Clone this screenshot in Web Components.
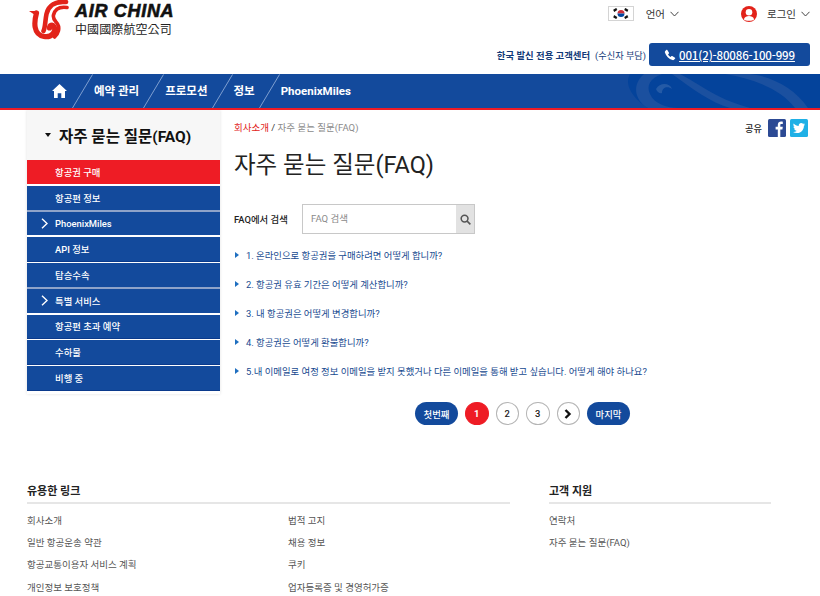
<!DOCTYPE html>
<html lang="ko">
<head>
<meta charset="utf-8">
<title>자주 묻는 질문(FAQ)</title>
<style>
  html, body { margin: 0; padding: 0; background: #fff; }
  body { height: 596px; overflow: hidden; font-family: Roboto, "Noto Sans CJK KR", sans-serif; color: #222; }
</style>
</head>
<body>
<air-header></air-header>
<air-nav></air-nav>
<air-page>
  <air-sidebar slot="side" heading="자주 묻는 질문(FAQ)">
    <side-item active>항공권 구매</side-item>
    <side-item>항공편 정보</side-item>
    <side-item expandable>PhoenixMiles</side-item>
    <side-item>API 정보</side-item>
    <side-item>탑승수속</side-item>
    <side-item expandable>특별 서비스</side-item>
    <side-item>항공편 초과 예약</side-item>
    <side-item>수하물</side-item>
    <side-item>비행 중</side-item>
  </air-sidebar>
  <air-faq>
    <faq-item>1. 온라인으로 항공권을 구매하려면 어떻게 합니까?</faq-item>
    <faq-item>2. 항공권 유효 기간은 어떻게 계산합니까?</faq-item>
    <faq-item>3. 내 항공권은 어떻게 변경합니까?</faq-item>
    <faq-item>4. 항공권은 어떻게 환불합니까?</faq-item>
    <faq-item>5.내 이메일로 여정 정보 이메일을 받지 못했거나 다른 이메일을 통해 받고 싶습니다. 어떻게 해야 하나요?</faq-item>
  </air-faq>
</air-page>
<air-footer></air-footer>

<script>
// Header: logo, language + login, call centre
const headerTemplate = document.createElement('template');
headerTemplate.innerHTML = `
<style>
  :host { display: flex; justify-content: space-between; height: 74px; padding: 0 10px 0 29px; box-sizing: border-box; }
  .logo { display: flex; gap: 6px; height: 40px; }
  .logo svg { width: 40px; height: 40px; flex: none; }
  .brand { padding-top: 2px; }
  .en { font: italic 700 18px/18px "Liberation Sans", sans-serif; color: #111; letter-spacing: .7px; -webkit-text-stroke: .6px #111; white-space: nowrap; }
  .zh { font: 400 12px/17px "Noto Sans CJK TC", sans-serif; color: #222; letter-spacing: .1px; white-space: nowrap; }
  .right { display: flex; flex-direction: column; align-items: flex-end; }
  .top { display: flex; align-items: center; height: 27px; font-size: 10.5px; color: #333; }
  .flag { width: 24px; height: 13px; border: 1px solid #d4d4d4; margin-right: 12px; display: block; }
  .chev { width: 9px; height: 6px; margin-left: 5px; }
  .lang { margin-right: 62px; display: flex; align-items: center; }
  .login { display: flex; align-items: center; }
  .user { width: 16px; height: 16px; margin-right: 10px; }
  .call { display: flex; align-items: center; margin-top: 16px; }
  .call-label { font-size: 9.4px; font-weight: 700; color: #123a78; white-space: nowrap; }
  .call-note { font-size: 9.2px; color: #123a78; margin: 0 3px 0 5px; white-space: nowrap; }
  .phone { display: flex; align-items: center; justify-content: center; gap: 3px; width: 161px; height: 23px; background: #134a9c; border-radius: 3px; color: #fff; font-family: "Noto Sans CJK KR", sans-serif; font-size: 11.5px; font-weight: 500; letter-spacing: -.15px; text-decoration: underline; }
  .phone svg { width: 12px; height: 12px; }
</style>
<div class="logo">
  <svg viewBox="29 0 40 40" fill="none" stroke="#e2231a" stroke-linecap="round">
    <path d="M29 11 L38 11 L35 15 Z" fill="#e2231a" stroke="none"/>
    <path d="M36.5 13 C34 22 33 34.5 44 36.5 C52 38 56.5 31 54 26.5 C52.5 24 49.5 25 49.5 28" stroke-width="5.2"/>
    <path d="M66 2 C56 1 48.5 5 46.5 14 C45 21 45.5 27 43.5 31" stroke-width="4.6"/>
    <path d="M67 7.5 C60 6.5 55 9 53.5 15 C52.5 19 55.5 21 57.5 24 C60 28 58.5 34 54.5 37" stroke-width="3.6"/>
  </svg>
  <div class="brand">
    <div class="en">AIR CHINA</div>
    <div class="zh">中國國際航空公司</div>
  </div>
</div>
<div class="right">
  <div class="top">
    <svg class="flag" viewBox="0 0 24 13">
      <rect width="24" height="13" fill="#fff"/>
      <path d="M8.5 6.5 a3.5 3.5 0 0 1 7 0 z" fill="#cd2e3a"/>
      <path d="M8.5 6.5 a3.5 3.5 0 0 0 7 0 z" fill="#0047a0"/>
      <g stroke="#111" stroke-width="1.3" stroke-linecap="square">
        <path d="M5 3 l2 -1.2 M5.5 4 l2 -1.2 M16.5 1.8 l2 1.2 M16 2.8 l2 1.2 M5 10 l2 1.2 M5.5 9 l2 1.2 M16.5 11.2 l2 -1.2 M16 10.2 l2 -1.2"/>
      </g>
    </svg>
    <span class="lang">언어
      <svg class="chev" viewBox="0 0 9 6" fill="none" stroke="#444"><path d="M.5 .8 L4.5 5 L8.5 .8"/></svg>
    </span>
    <svg class="user" viewBox="0 0 16 16">
      <circle cx="8" cy="8" r="8" fill="#e2231a"/>
      <circle cx="8" cy="6.2" r="3.3" fill="#fff"/>
      <path d="M2.8 13.5 C3.5 10.8 6 10 8 10 C10 10 12.5 10.8 13.2 13.5 C11.5 15.2 4.5 15.2 2.8 13.5 Z" fill="#fff"/>
    </svg>
    <span class="login">로그인
      <svg class="chev" viewBox="0 0 9 6" fill="none" stroke="#444"><path d="M.5 .8 L4.5 5 L8.5 .8"/></svg>
    </span>
  </div>
  <div class="call">
    <span class="call-label">한국 발신 전용 고객센터</span>
    <span class="call-note">(수신자 부담)</span>
    <span class="phone">
      <svg viewBox="0 0 24 24" fill="#fff"><path d="M6.6 2 L10 7.5 C10.3 8 10.2 8.6 9.8 9 L8 10.8 C9.2 13 11 14.8 13.2 16 L15 14.2 C15.4 13.8 16 13.7 16.5 14 L22 17.4 C22.6 17.8 22.7 18.5 22.3 19 L20 21.5 C19.2 22.3 18 22.6 17 22.2 C9.8 20 4 14.2 1.8 7 C1.4 6 1.7 4.8 2.5 4 L5 1.7 C5.5 1.3 6.2 1.4 6.6 2 Z"/></svg>
      001(2)-80086-100-999
    </span>
  </div>
</div>
`;

class AirHeader extends HTMLElement {
  constructor() {
    super();
    this.attachShadow({ mode: 'open' });
    this.shadowRoot.appendChild(headerTemplate.content.cloneNode(true));
  }
}
customElements.define('air-header', AirHeader);

// Main navigation bar
const navTemplate = document.createElement('template');
navTemplate.innerHTML = `
<style>
  :host { display: flex; align-items: center; position: relative; height: 36px; padding-left: 52px; box-sizing: border-box; background: #134a9c; border-bottom: 2px solid #ee1c25; overflow: hidden; }
  a { position: relative; color: #fff; font-size: 11.5px; font-weight: 700; white-space: nowrap; line-height: 34px; }
  .home { width: 15px; height: 14px; position: relative; display: block; }
  .sep { width: 21px; height: 34px; margin: 0 1px 0 4px; flex: none; position: relative; }
  .sep.first { margin-left: 5px; }
  .wave { position: absolute; right: 0; top: 0; width: 230px; height: 34px; }
</style>
<svg class="wave" viewBox="0 0 230 34" preserveAspectRatio="none">
  <rect width="230" height="34" fill="#04439b"/>
  <path d="M0 0 H40 C34 10 42 24 58 34 H0 Z" fill="#134a9c"/>
  <path d="M72 0 C60 4 56 12 60 20 C64 30 78 34 88 34 H58 C44 26 42 10 54 0 Z" fill="#1b509f"/>
  <path d="M66 15 C70 8 80 9 82 15 C78 12 72 13 72 19 C70 20 67 18 66 15 Z" fill="#245aa6"/>
  <path d="M90 0 C110 10 124 24 160 34 H140 C120 28 104 16 82 0 Z" fill="#1b509f"/>
  <path d="M135 0 C160 4 190 14 205 34 H218 C205 14 180 2 160 0 Z" fill="#1b509f"/>
</svg>
<svg class="home" viewBox="0 0 15 14" fill="#fff"><path d="M7.5 0 L15 7 H13 V14 H9.3 V9.3 H5.7 V14 H2 V7 H0 Z"/></svg>
<svg class="sep first" viewBox="0 0 21 34" fill="none" stroke="#7f9fd0"><path d="M.5 34 L20.5 .5"/></svg>
<a>예약 관리</a>
<svg class="sep" viewBox="0 0 21 34" fill="none" stroke="#7f9fd0"><path d="M.5 34 L20.5 .5"/></svg>
<a>프로모션</a>
<svg class="sep" viewBox="0 0 21 34" fill="none" stroke="#7f9fd0"><path d="M.5 34 L20.5 .5"/></svg>
<a>정보</a>
<svg class="sep" viewBox="0 0 21 34" fill="none" stroke="#7f9fd0"><path d="M.5 34 L20.5 .5"/></svg>
<a>PhoenixMiles</a>
`;

class AirNav extends HTMLElement {
  constructor() {
    super();
    this.attachShadow({ mode: 'open' });
    this.shadowRoot.appendChild(navTemplate.content.cloneNode(true));
  }
}
customElements.define('air-nav', AirNav);

// Two column page body
const pageTemplate = document.createElement('template');
pageTemplate.innerHTML = `
<style>
  :host { display: flex; padding-left: 27px; gap: 14px; height: 375px; box-sizing: border-box; }
</style>
<slot name="side"></slot>
<slot></slot>
`;

class AirPage extends HTMLElement {
  constructor() {
    super();
    this.attachShadow({ mode: 'open' });
    this.shadowRoot.appendChild(pageTemplate.content.cloneNode(true));
  }
}
customElements.define('air-page', AirPage);

// Sidebar menu
const sidebarTemplate = document.createElement('template');
sidebarTemplate.innerHTML = `
<style>
  :host { display: block; width: 193px; height: 284px; background: #fff; box-shadow: 0 0 3px rgba(0,0,0,.12); }
  h2 { display: flex; align-items: center; margin: 0; height: 50px; padding-left: 18px; gap: 8px; background: #f7f7f7; font-size: 15.5px; font-weight: 700; color: #111; white-space: nowrap; }
  i { width: 0; height: 0; border: 3px solid transparent; border-top: 4px solid #111; border-bottom: 0; }
  .list { display: flex; flex-direction: column; }
</style>
<h2><i></i><span class="label"></span></h2>
<div class="list"><slot></slot></div>
`;

class AirSidebar extends HTMLElement {
  constructor() {
    super();
    this.attachShadow({ mode: 'open' });
    this.shadowRoot.appendChild(sidebarTemplate.content.cloneNode(true));
  }

  connectedCallback() {
    this.shadowRoot.querySelector('.label').textContent = this.getAttribute('heading');
  }
}
customElements.define('air-sidebar', AirSidebar);

const sideItemTemplate = document.createElement('template');
sideItemTemplate.innerHTML = `
<style>
  :host { display: flex; align-items: center; position: relative; height: 23.75px; margin-bottom: 2px; padding-left: 28px; background: #134a9c; color: #fff; font-size: 9.4px; font-weight: 500; box-shadow: 0 1px 0 #0a3a8c; }
  :host([active]) { background: #ee1c25; box-shadow: none; }
  :host([expandable]) { box-shadow: 0 -2px 0 #8ea3c9; }
  svg { display: none; position: absolute; left: 14px; top: 6px; width: 7px; height: 11px; }
  :host([expandable]) svg { display: block; }
</style>
<svg viewBox="0 0 7 11" fill="none" stroke="#fff" stroke-width="1.4"><path d="M1 .8 L6 5.5 L1 10.2"/></svg>
<slot></slot>
`;

class SideItem extends HTMLElement {
  constructor() {
    super();
    this.attachShadow({ mode: 'open' });
    this.shadowRoot.appendChild(sideItemTemplate.content.cloneNode(true));
  }
}
customElements.define('side-item', SideItem);

// FAQ content column
const faqTemplate = document.createElement('template');
faqTemplate.innerHTML = `
<style>
  :host { display: block; width: 577px; position: relative; }
  .crumbs-row { display: flex; justify-content: space-between; height: 36px; }
  .crumbs { font-size: 9.5px; line-height: 14px; margin-top: 11px; color: #8a8a8a; white-space: nowrap; }
  .crumbs b { font-weight: 400; color: #e2231a; }
  .crumbs em { font-style: normal; color: #333; }
  .share { display: flex; align-items: center; gap: 4px; height: 18px; margin: 9px 3px 0 0; font-size: 9.2px; font-weight: 500; color: #222; }
  .share span { margin-right: 2px; }
  .share svg { width: 18px; height: 18px; display: block; }
  h1 { margin: 0; height: 58px; font-size: 23.5px; line-height: 38px; font-weight: 400; color: #222; white-space: nowrap; }
  .search { display: flex; align-items: center; height: 30px; margin-bottom: 6px; }
  label { width: 68px; font-size: 9.4px; font-weight: 500; color: #222; }
  .box { display: flex; width: 173px; height: 30px; box-sizing: border-box; border: 1px solid #c8c8c8; }
  .field { flex: 1; padding-left: 8px; font-size: 9.5px; line-height: 28px; color: #8a8a8a; }
  .go { width: 18px; background: #e2e2e2; display: flex; align-items: center; justify-content: center; }
  .go svg { width: 11px; height: 11px; }
  .list { display: flex; flex-direction: column; }
  .pager { display: flex; justify-content: center; gap: 7px; margin-top: 17px; }
  .pill, .num { display: flex; align-items: center; justify-content: center; height: 23px; box-sizing: border-box; font-size: 9.4px; font-weight: 500; }
  .pill { width: 43px; border-radius: 12px; background: #134a9c; color: #fff; }
  .num { width: 23.5px; border-radius: 50%; border: 1px solid #b5b5b5; color: #222; }
  .num.on { background: #ee1c25; border-color: #ee1c25; color: #fff; font-weight: 700; }
  .num svg { width: 8px; height: 10px; }
</style>
<div class="crumbs-row">
  <div class="crumbs"><b>회사소개</b> <em>/</em> 자주 묻는 질문(FAQ)</div>
  <div class="share">
    <span>공유</span>
    <svg viewBox="0 0 18 18"><rect width="18" height="18" rx="1.5" fill="#2c4a94"/><path d="M9.8 18 V10.6 H7.6 V7.8 H9.8 V6 C9.8 3.7 11.2 2.6 13.1 2.6 C13.9 2.6 14.6 2.7 14.8 2.7 V5.1 H13.5 C12.5 5.1 12.3 5.6 12.3 6.3 V7.8 H14.8 L14.4 10.6 H12.3 V18 Z" fill="#fff"/></svg>
    <svg viewBox="0 0 18 18"><rect width="18" height="18" rx="1.5" fill="#1fb0e6"/><path d="M15 5.2 C14.5 5.4 14 5.6 13.5 5.6 C14 5.3 14.4 4.8 14.6 4.2 C14.1 4.5 13.5 4.7 13 4.8 C12.5 4.3 11.9 4 11.2 4 C9.8 4 8.7 5.1 8.7 6.5 C8.7 6.7 8.7 6.9 8.8 7.1 C6.7 7 4.9 6 3.7 4.5 C3.1 5.6 3.4 7 4.5 7.8 C4.1 7.8 3.7 7.7 3.4 7.5 C3.4 8.7 4.2 9.8 5.4 10 C5 10.1 4.6 10.1 4.3 10.1 C4.6 11.1 5.6 11.8 6.7 11.9 C5.6 12.7 4.3 13.1 3 13 C4.1 13.7 5.5 14.1 6.9 14.1 C11.5 14.1 14.1 10.3 13.9 6.8 C14.4 6.4 14.8 5.9 15 5.2 Z" fill="#fff"/></svg>
  </div>
</div>
<h1>자주 묻는 질문(FAQ)</h1>
<div class="search">
  <label>FAQ에서 검색</label>
  <div class="box">
    <div class="field">FAQ 검색</div>
    <div class="go"><svg viewBox="0 0 12 12" fill="none" stroke="#555" stroke-width="1.7"><circle cx="5" cy="5" r="3.7"/><path d="M7.8 7.8 L11.3 11.3"/></svg></div>
  </div>
</div>
<div class="list"><slot></slot></div>
<div class="pager">
  <span class="pill">첫번째</span>
  <span class="num on">1</span>
  <span class="num">2</span>
  <span class="num">3</span>
  <span class="num"><svg viewBox="0 0 8 10" fill="none" stroke="#111" stroke-width="2.4"><path d="M1.5 1 L5.5 5 L1.5 9"/></svg></span>
  <span class="pill">마지막</span>
</div>
`;

class AirFaq extends HTMLElement {
  constructor() {
    super();
    this.attachShadow({ mode: 'open' });
    this.shadowRoot.appendChild(faqTemplate.content.cloneNode(true));
  }
}
customElements.define('air-faq', AirFaq);

const faqItemTemplate = document.createElement('template');
faqItemTemplate.innerHTML = `
<style>
  :host { display: flex; align-items: center; height: 29px; color: #16498f; font-size: 9.4px; white-space: nowrap; }
  i { width: 0; height: 0; margin: 0 7px 0 1px; border: 3.5px solid transparent; border-left: 4px solid #1f6fc0; border-right: 0; }
</style>
<i></i><slot></slot>
`;

class FaqItem extends HTMLElement {
  constructor() {
    super();
    this.attachShadow({ mode: 'open' });
    this.shadowRoot.appendChild(faqItemTemplate.content.cloneNode(true));
  }
}
customElements.define('faq-item', FaqItem);

// Footer link columns
const footerTemplate = document.createElement('template');
footerTemplate.innerHTML = `
<style>
  :host { display: grid; grid-template-columns: 483px 222px; column-gap: 39px; padding-left: 27px; font-size: 9.5px; color: #555; }
  h3 { margin: 0 0 6px; height: 17px; font-size: 11px; line-height: 14px; font-weight: 700; color: #222; border-bottom: 2px solid #e6e6e6; }
  .cols { display: grid; grid-template-columns: 261px 1fr; }
  a { display: block; height: 22.2px; line-height: 22.2px; white-space: nowrap; }
</style>
<section>
  <h3>유용한 링크</h3>
  <div class="cols">
    <div><a>회사소개</a><a>일반 항공운송 약관</a><a>항공교통이용자 서비스 계획</a><a>개인정보 보호정책</a></div>
    <div><a>법적 고지</a><a>채용 정보</a><a>쿠키</a><a>업자등록증 및 경영허가증</a></div>
  </div>
</section>
<section>
  <h3>고객 지원</h3>
  <a>연락처</a><a>자주 묻는 질문(FAQ)</a>
</section>
`;

class AirFooter extends HTMLElement {
  constructor() {
    super();
    this.attachShadow({ mode: 'open' });
    this.shadowRoot.appendChild(footerTemplate.content.cloneNode(true));
  }
}
customElements.define('air-footer', AirFooter);
</script>
</body>
</html>
